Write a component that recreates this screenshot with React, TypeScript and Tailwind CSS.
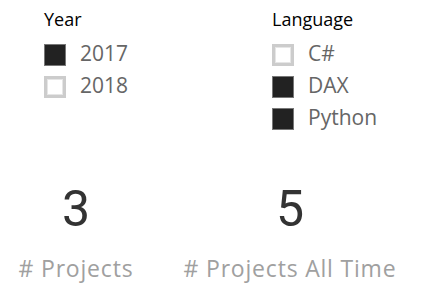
import React from "react";

type Item = { label: string; checked: boolean };

function Box({ checked }: { checked: boolean }) {
  if (checked) {
    return <div className="w-[22px] h-[22px] shrink-0 bg-[#222222] border border-[#777777]" />;
  }
  return (
    <div className="w-[22px] h-[22px] shrink-0 border-[3px] border-[#cccccc] bg-white">
      <div className="w-full h-full border border-[#e6e6e6]" />
    </div>
  );
}

function Slicer({ title, items, className }: { title: string; items: Item[]; className: string }) {
  return (
    <div className={className}>
      <div className="text-[18px] leading-[24px] text-black">{title}</div>
      <div className="mt-[8px] flex flex-col">
        {items.map((it) => (
          <div key={it.label} className="h-[32px] flex items-center">
            <Box checked={it.checked} />
            <span className="ml-[14px] mb-1 text-[21px] leading-[28px] text-[#666666]">{it.label}</span>
          </div>
        ))}
      </div>
    </div>
  );
}

function Card({ value, label, className }: { value: string; label: string; className: string }) {
  return (
    <div className={className}>
      <div
        className="text-[50px] leading-[50px] text-[#333333]"
        style={{ fontFamily: "Roboto, sans-serif" }}
      >
        {value}
      </div>
      <div className="mt-[20px] text-[23px] leading-[28px] tracking-[0.8px] text-[#a0a0a0] whitespace-nowrap">
        {label}
      </div>
    </div>
  );
}

export default function App() {
  return (
    <div
      className="w-[422px] h-[295px] bg-white overflow-hidden"
      style={{ fontFamily: '"Open Sans", sans-serif' }}
    >
      <div className="flex pt-[7px]">
        <Slicer
          className="pl-[44px] w-[272px]"
          title="Year"
          items={[
            { label: "2017", checked: true },
            { label: "2018", checked: false },
          ]}
        />
        <Slicer
          className=""
          title="Language"
          items={[
            { label: "C#", checked: false },
            { label: "DAX", checked: true },
            { label: "Python", checked: true },
          ]}
        />
      </div>
      <div className="flex mt-[49px]">
        <Card className="w-[152px] flex flex-col items-center" value="3" label="# Projects" />
        <Card className="ml-[8px] w-[260px] flex flex-col items-center" value="5" label="# Projects All Time" />
      </div>
    </div>
  );
}
